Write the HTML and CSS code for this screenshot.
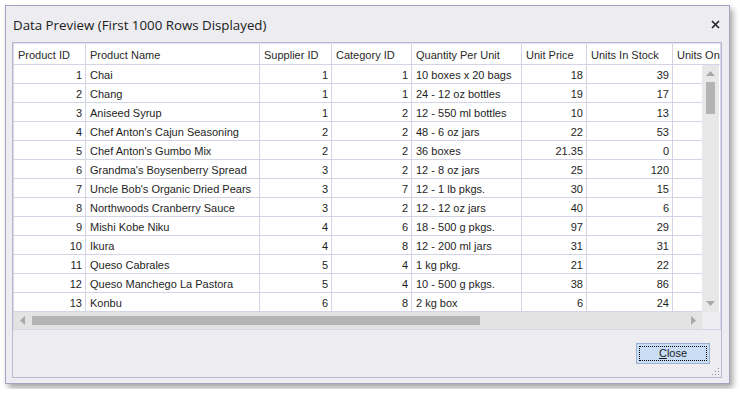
FILE: index.html
```html
<!DOCTYPE html>
<html>
<head>
    <title>Data Preview</title>
    <link rel="stylesheet" href="styles.css">
</head>
<body>
    <div class="dialog">
        <div class="titlebar">
            <span class="title">Data Preview (First 1000 Rows Displayed)</span>
            <svg class="close-x" width="9" height="9" viewBox="0 0 9 9">
                <path d="M1 1 L8 8 M8 1 L1 8" stroke="#222" stroke-width="1.6"/>
            </svg>
        </div>

        <div class="panel">
            <div class="grid">
                <div class="head">
                    <div class="row">
                        <div class="cell">Product ID</div>
                        <div class="cell">Product Name</div>
                        <div class="cell">Supplier ID</div>
                        <div class="cell">Category ID</div>
                        <div class="cell">Quantity Per Unit</div>
                        <div class="cell">Unit Price</div>
                        <div class="cell">Units In Stock</div>
                        <div class="cell">Units On Order</div>
                    </div>
                </div>

                <div class="body">
                    <div class="rows">
                        <div class="row"><div class="cell num">1</div><div class="cell">Chai</div><div class="cell num">1</div><div class="cell num">1</div><div class="cell">10 boxes x 20 bags</div><div class="cell num">18</div><div class="cell num">39</div><div class="cell num"></div></div>
                        <div class="row"><div class="cell num">2</div><div class="cell">Chang</div><div class="cell num">1</div><div class="cell num">1</div><div class="cell">24 - 12 oz bottles</div><div class="cell num">19</div><div class="cell num">17</div><div class="cell num"></div></div>
                        <div class="row"><div class="cell num">3</div><div class="cell">Aniseed Syrup</div><div class="cell num">1</div><div class="cell num">2</div><div class="cell">12 - 550 ml bottles</div><div class="cell num">10</div><div class="cell num">13</div><div class="cell num"></div></div>
                        <div class="row"><div class="cell num">4</div><div class="cell">Chef Anton's Cajun Seasoning</div><div class="cell num">2</div><div class="cell num">2</div><div class="cell">48 - 6 oz jars</div><div class="cell num">22</div><div class="cell num">53</div><div class="cell num"></div></div>
                        <div class="row"><div class="cell num">5</div><div class="cell">Chef Anton's Gumbo Mix</div><div class="cell num">2</div><div class="cell num">2</div><div class="cell">36 boxes</div><div class="cell num">21.35</div><div class="cell num">0</div><div class="cell num"></div></div>
                        <div class="row"><div class="cell num">6</div><div class="cell">Grandma's Boysenberry Spread</div><div class="cell num">3</div><div class="cell num">2</div><div class="cell">12 - 8 oz jars</div><div class="cell num">25</div><div class="cell num">120</div><div class="cell num"></div></div>
                        <div class="row"><div class="cell num">7</div><div class="cell">Uncle Bob's Organic Dried Pears</div><div class="cell num">3</div><div class="cell num">7</div><div class="cell">12 - 1 lb pkgs.</div><div class="cell num">30</div><div class="cell num">15</div><div class="cell num"></div></div>
                        <div class="row"><div class="cell num">8</div><div class="cell">Northwoods Cranberry Sauce</div><div class="cell num">3</div><div class="cell num">2</div><div class="cell">12 - 12 oz jars</div><div class="cell num">40</div><div class="cell num">6</div><div class="cell num"></div></div>
                        <div class="row"><div class="cell num">9</div><div class="cell">Mishi Kobe Niku</div><div class="cell num">4</div><div class="cell num">6</div><div class="cell">18 - 500 g pkgs.</div><div class="cell num">97</div><div class="cell num">29</div><div class="cell num"></div></div>
                        <div class="row"><div class="cell num">10</div><div class="cell">Ikura</div><div class="cell num">4</div><div class="cell num">8</div><div class="cell">12 - 200 ml jars</div><div class="cell num">31</div><div class="cell num">31</div><div class="cell num"></div></div>
                        <div class="row"><div class="cell num">11</div><div class="cell">Queso Cabrales</div><div class="cell num">5</div><div class="cell num">4</div><div class="cell">1 kg pkg.</div><div class="cell num">21</div><div class="cell num">22</div><div class="cell num"></div></div>
                        <div class="row"><div class="cell num">12</div><div class="cell">Queso Manchego La Pastora</div><div class="cell num">5</div><div class="cell num">4</div><div class="cell">10 - 500 g pkgs.</div><div class="cell num">38</div><div class="cell num">86</div><div class="cell num"></div></div>
                        <div class="row"><div class="cell num">13</div><div class="cell">Konbu</div><div class="cell num">6</div><div class="cell num">8</div><div class="cell">2 kg box</div><div class="cell num">6</div><div class="cell num">24</div><div class="cell num"></div></div>
                    </div>

                    <!-- vertical scrollbar -->
                    <div class="vscroll">
                        <svg class="arrow" width="9" height="5" viewBox="0 0 9 5"><path d="M0 5 L4.5 0 L9 5 Z" fill="#a8a8a8"/></svg>
                        <div class="vtrack"><div class="vthumb"></div></div>
                        <svg class="arrow" width="9" height="5" viewBox="0 0 9 5"><path d="M0 0 L4.5 5 L9 0 Z" fill="#a8a8a8"/></svg>
                    </div>
                </div>

                <!-- horizontal scrollbar -->
                <div class="hbar">
                    <div class="hscroll">
                        <svg class="arrow" width="5" height="9" viewBox="0 0 5 9"><path d="M5 0 L0 4.5 L5 9 Z" fill="#a8a8a8"/></svg>
                        <div class="htrack"><div class="hthumb"></div></div>
                        <svg class="arrow" width="5" height="9" viewBox="0 0 5 9"><path d="M0 0 L5 4.5 L0 9 Z" fill="#a8a8a8"/></svg>
                    </div>
                    <div class="corner"></div>
                </div>
            </div>

            <div class="footer">
                <button class="btn"><span class="focus"><u>C</u>lose</span></button>
            </div>

            <svg class="grip" width="9" height="9" viewBox="0 0 9 9">
                <rect x="7" y="1" width="1" height="1" fill="#8a8a9a"/>
                <rect x="4" y="4" width="1" height="1" fill="#8a8a9a"/>
                <rect x="7" y="4" width="1" height="1" fill="#8a8a9a"/>
                <rect x="1" y="7" width="1" height="1" fill="#8a8a9a"/>
                <rect x="4" y="7" width="1" height="1" fill="#8a8a9a"/>
                <rect x="7" y="7" width="1" height="1" fill="#8a8a9a"/>
            </svg>
        </div>
    </div>
</body>
</html>
```

FILE: styles.css
```css
/* page */
body {
    margin: 0;
    padding: 0;
    background-color: #fff;
    font-family: "Liberation Sans", Arial, sans-serif;
}

/* dialog window */
.dialog {
    margin: 5px;
    width: 725px;
    height: 379px;
    box-sizing: border-box;
    border: 1px solid #a3a3c2;
    background-color: #ececf1;
    box-shadow: 3px 4px 6px rgba(0, 0, 0, 0.35);
    display: flex;
    flex-direction: column;
}

.titlebar {
    height: 36px;
    display: flex;
    align-items: center;
    justify-content: space-between;
    padding: 0 9px 0 7px;
}

.title {
    font-family: "Open Sans", sans-serif;
    font-size: 13.3px;
    color: #202020;
    margin-top: 1px;
}

.close-x {
    margin-top: 1px;
}

/* bordered panel holding grid and button */
.panel {
    position: relative;
    flex: 1;
    margin: 0 7px 5px 6px;
    border: 1px solid #b9b9d3;
    display: flex;
    flex-direction: column;
}

.grid {
    border: 1px solid #d6d6e6;
    border-top-color: #e2e2ec;
    background-color: #fff;
    font-size: 11px;
    color: #1e1e1e;
}

.row {
    display: grid;
    grid-template-columns: 72px 174px 72px 80px 110px 65px 86px 100px;
    height: 19px;
}

.cell {
    box-sizing: border-box;
    border-right: 1px solid #d4d4e6;
    border-bottom: 1px solid #d4d4e6;
    padding: 2px 3px 0 4px;
    line-height: 16px;
    white-space: nowrap;
    overflow: hidden;
}

.cell.num {
    text-align: right;
}

.head {
    width: 706px;
    overflow: hidden;
}

.head .row {
    height: 21px;
}

.head .cell {
    padding-top: 3px;
    line-height: 17px;
    padding-left: 4px;
    color: #2a2a2a;
}

.body {
    display: flex;
    height: 247px;
}

.rows {
    width: 688px;
    overflow: hidden;
}

/* scrollbars */
.vscroll {
    width: 17px;
    background-color: #e8e8e8;
    display: flex;
    flex-direction: column;
    align-items: center;
}

.vscroll .arrow {
    margin: 6px 0;
}

.vtrack {
    flex: 1;
    width: 100%;
    display: flex;
    justify-content: center;
}

.vthumb {
    width: 9px;
    height: 32px;
    background-color: #b4b4b4;
}

.hbar {
    display: flex;
    height: 17px;
}

.hscroll {
    width: 688px;
    background-color: #e3e3e3;
    display: flex;
    align-items: center;
}

.hscroll .arrow {
    margin: 0 6px;
}

.htrack {
    flex: 1;
    height: 100%;
    display: flex;
    align-items: center;
}

.hthumb {
    margin-left: 1px;
    width: 448px;
    height: 9px;
    background-color: #b4b4b4;
}

.corner {
    flex: 1;
    background-color: #ececf1;
}

/* footer with close button */
.footer {
    display: flex;
    justify-content: flex-end;
    padding: 13px 11px 0 0;
}

.btn {
    width: 74px;
    height: 21px;
    padding: 2px;
    border: 1px solid #9cb2d2;
    background-color: #c9ddf4;
    font-family: "Liberation Sans", Arial, sans-serif;
    font-size: 11px;
    color: #1e1e1e;
}

.focus {
    display: block;
    height: 100%;
    box-sizing: border-box;
    border: 1px dotted #000;
    line-height: 13px;
}

.grip {
    position: absolute;
    right: 1px;
    bottom: 1px;
}
```
